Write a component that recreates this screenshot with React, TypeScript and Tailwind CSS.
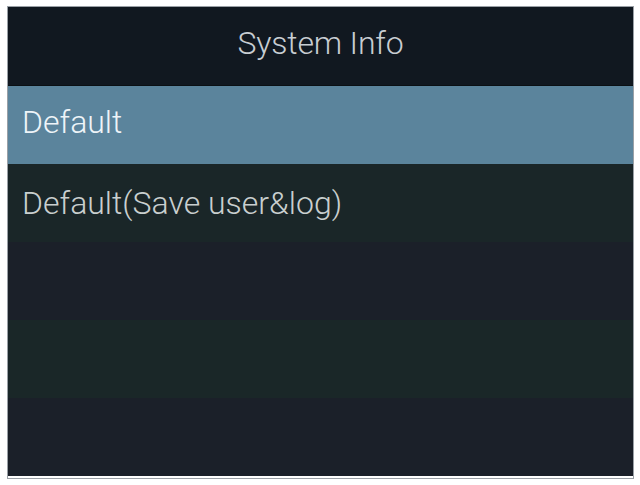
export default function App() {
  const rows = [
    { label: "Default", cls: "bg-[#5b849c] text-[#eef4f8] pb-[7px]" },
    { label: "Default(Save user&log)", cls: "bg-[#1a2628] text-[#c9cfcf]" },
    { label: "", cls: "bg-[#1b2029]" },
    { label: "", cls: "bg-[#1a2728]" },
    { label: "", cls: "bg-[#1b2029]" },
  ];
  return (
    <div className="w-[640px] h-[485px] bg-white pt-[6px] pl-[7px]" style={{ fontFamily: "Roboto, 'Liberation Sans', sans-serif" }}>
      <div className="w-[627px] h-[473px] flex flex-col border border-[#9aa0a6] overflow-hidden">
        <div className="h-[79px] shrink-0 bg-[#111820] flex items-center justify-center pb-[7px] text-[32px] font-light tracking-[-0.2px] text-[#c8cdd2] border-b border-[#0b1014]">
          System Info
        </div>
        {rows.map((r, i) => (
          <div key={i} className={`h-[78px] shrink-0 ${r.cls} flex items-center pl-[14px] text-[32px] font-light`}>
            {r.label}
          </div>
        ))}
      </div>
    </div>
  );
}
